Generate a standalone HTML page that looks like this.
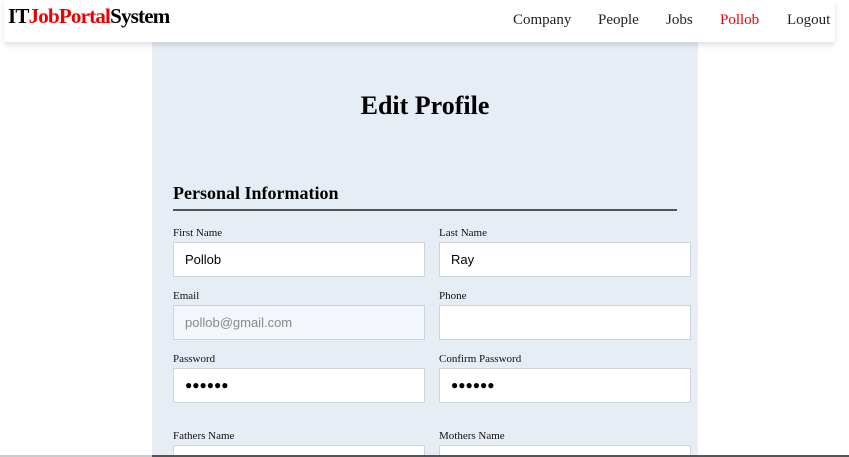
<!DOCTYPE html><html style="overflow:hidden;height:457px"><head><style>
html,body{margin:0;width:849px;height:457px;overflow:hidden}
body{background:#fff;font-family:"Liberation Serif",serif;position:relative}
.nav{position:absolute;left:4px;top:0;width:831px;height:42px;background:#fff;box-shadow:0 3px 5px rgba(0,0,0,.12);z-index:2}
.logo{position:absolute;left:4px;top:4px;font-size:21px;font-weight:bold;color:#000;letter-spacing:-0.8px}
.logo span{color:#e00}
.links a{position:absolute;top:12px;font-size:15px;color:#222;text-decoration:none}
.panel{position:absolute;left:152px;top:42px;width:546px;height:413px;overflow:hidden;background:#e7edf5}
h1{position:absolute;left:0;width:546px;text-align:center;top:49px;margin:0;font-size:26px}
h2{position:absolute;left:21px;top:141px;margin:0;font-size:18px}
.hr{position:absolute;left:21px;top:167px;width:504px;height:2px;background:#555}
.l{position:absolute;font-size:11px;color:#111}
.i{position:absolute;height:33px;background:#fff;border:1px solid #cfd4da;font-family:"Liberation Sans",sans-serif;font-size:13px;line-height:33px;padding-left:11px;width:239px}
.d{font-size:12px}
.bl{position:absolute;left:152px;top:455px;width:697px;height:2px;background:#555}
.bl2{position:absolute;left:0;top:455px;width:152px;height:2px;background:#ccc}
</style></head><body>
<div class="nav"><div class="logo">IT<span>JobPortal</span>System</div>
<div class="links"><a style="left:509px">Company</a><a style="left:594px">People</a><a style="left:662px">Jobs</a><a style="left:716px;color:#e00">Pollob</a><a style="left:783px">Logout</a></div></div>
<div class="panel">
<h1>Edit Profile</h1>
<h2>Personal Information</h2><div class="hr"></div>
<div class="l" style="left:21px;top:185px">First Name</div><div class="l" style="left:287px;top:185px">Last Name</div>
<div class="i" style="left:21px;top:200px">Pollob</div><div class="i" style="left:287px;top:200px">Ray</div>
<div class="l" style="left:21px;top:248px">Email</div><div class="l" style="left:287px;top:248px">Phone</div>
<div class="i" style="left:21px;top:263px;background:#f3f6fa;color:#888">pollob@gmail.com</div><div class="i" style="left:287px;top:263px"></div>
<div class="l" style="left:21px;top:311px">Password</div><div class="l" style="left:287px;top:311px">Confirm Password</div>
<div class="i d" style="left:21px;top:326px">●●●●●●</div><div class="i d" style="left:287px;top:326px">●●●●●●</div>
<div class="l" style="left:21px;top:388px">Fathers Name</div><div class="l" style="left:287px;top:388px">Mothers Name</div>
<div class="i" style="left:21px;top:403px"></div><div class="i" style="left:287px;top:403px"></div>
</div>
<div class="bl2"></div><div class="bl"></div>
</body></html>
